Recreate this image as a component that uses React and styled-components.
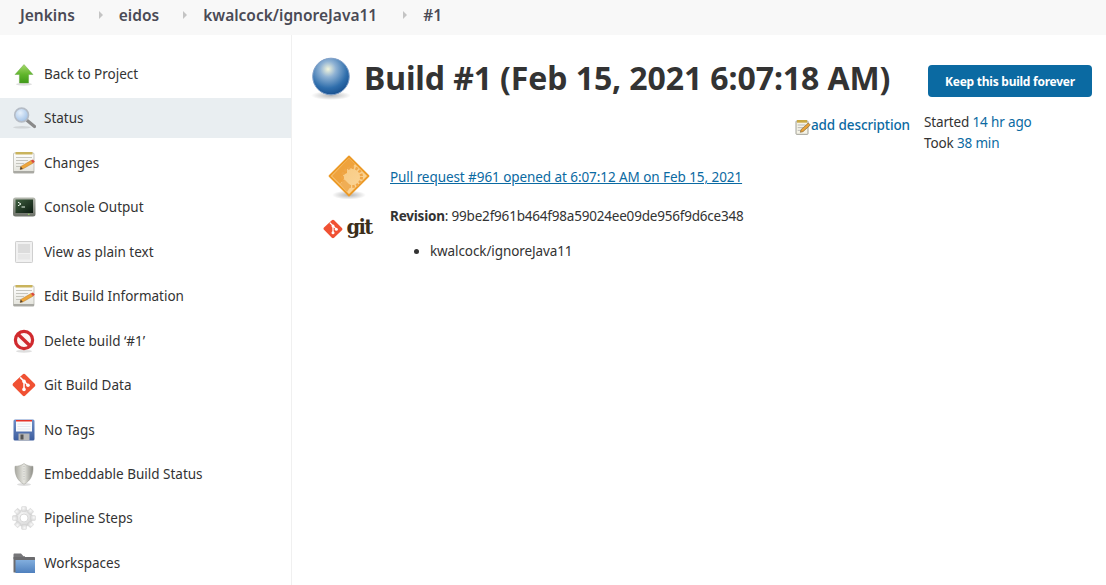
import React from "react";
import styled, { createGlobalStyle } from "styled-components";

const Global = createGlobalStyle`
  html, body { margin: 0; padding: 0; background: #fff; }
  body { font-family: "Noto Sans", "Open Sans", sans-serif; color: #333; font-size: 13.5px; height: 585px; overflow: hidden; }
`;

const Page = styled.div`display: flex; flex-direction: column; height: 585px; overflow: hidden;`;
const Crumbs = styled.nav`
  height: 35px; flex: none; background: #f8f8f8; display: flex; align-items: center;
  padding-left: 20px; padding-bottom: 5px; box-sizing: border-box; font-weight: 600; font-size: 15.5px; color: #4a4a55;
`;
const Crumb = styled.span`white-space: nowrap;`;
const Sep = styled.span`
  width: 0; height: 0; border-left: 4px solid #c4c4c4; border-top: 4px solid transparent; border-bottom: 4px solid transparent;
  margin: 0 ${p => p.$r}px 0 ${p => p.$l}px;
`;
const Body = styled.div`display: flex; flex: 1; min-height: 0;`;
const Side = styled.aside`
  width: 291px; flex: none; border-right: 1px solid #f0f0f0; padding-top: 19px; box-sizing: content-box;
`;
const Row = styled.div`
  height: 40px; margin-bottom: 4.45px; display: flex; align-items: center; padding-left: 12px; gap: 8px;
  background: ${p => (p.$active ? "#e9eef1" : "transparent")}; font-size: 13.5px; color: #333;
  white-space: nowrap;
`;
const IconBox = styled.span`display: block; width: 24px; height: 24px; flex: none;`;
const Main = styled.main`flex: 1; min-width: 0; padding: 0 14px 0 19px;`;
const TitleRow = styled.div`display: flex; align-items: flex-start; padding-top: 22px; height: 54px; box-sizing: content-box;`;
const Title = styled.h1`
  margin: 1px 0 0 13px; font-size: 32px; line-height: 40px; font-weight: 700; letter-spacing: -0.1px; color: #333; white-space: nowrap;
`;
const KeepButton = styled.button`
  margin: 8px 0 0 auto; width: 164px; height: 32px; border: 0; border-radius: 4px; background: #0b6aa2; color: #fff;
  font: 700 12px "Noto Sans", sans-serif; letter-spacing: -0.25px; padding: 0;
`;
const MetaRow = styled.div`display: flex; justify-content: flex-end; height: 30px;`;
const AddDesc = styled.a`
  display: flex; align-items: flex-start; font-size: 13.5px; font-weight: 500; color: #0b6aa2; line-height: 18px; margin-top: 5px; letter-spacing: -0.1px;
`;
const Times = styled.div`width: 168px; margin-left: 14px; font-size: 13.5px; letter-spacing: -0.15px; line-height: 21px; flex: none; margin-top: 1px;`;
const Blue = styled.span`color: #0b6aa2;`;
const Builds = styled.div`
  display: grid; grid-template-columns: 78px 1fr; margin-top: 14px;
`;
const LogoCell = styled.div`display: flex; justify-content: center; align-items: ${p => p.$a || "center"}; height: ${p => p.$h}px; padding-top: ${p => p.$t || 0}px;`;
const Cell = styled.div`padding-top: ${p => p.$t}px; margin-left: 1px; font-size: 13.5px; line-height: 18px;`;
const PRLink = styled.a`color: #0b6aa2; text-decoration: underline; letter-spacing: -0.07px;`;
const Rev = styled.div`letter-spacing: -0.2px;`;
const Bold = styled.b`font-weight: 700;`;
const List = styled.ul`margin: 17px 0 0; padding-left: 40px; letter-spacing: -0.1px;`;
const GitLogo = styled.span`display: flex; align-items: center; gap: 3px; margin-left: -5px;`;
const GitWord = styled.span`font: 700 19.5px/22px "DejaVu Serif", serif; color: #3c2e1a; letter-spacing: -1.6px; margin-top: -3px;`;

const Shadow = ({ y = 22.5, rx = 9 }) => <ellipse cx="12" cy={y} rx={rx} ry="1.4" fill="#000" opacity=".13" />;

const Arrow = () => (
  <svg width="24" height="24" viewBox="0 0 24 24">
    <defs><linearGradient id="ag" x1="0" y1="0" x2="0" y2="1"><stop offset="0" stopColor="#a5d86a" /><stop offset=".55" stopColor="#5fb52a" /><stop offset="1" stopColor="#3f9a18" /></linearGradient></defs>
    <Shadow y="22.3" rx="8" />
    <path d="M12 2.5 21 12.5H16.6V21H7.4V12.5H3Z" fill="url(#ag)" stroke="#5c9e3a" strokeWidth=".4" />
  </svg>
);
const Search = () => (
  <svg width="24" height="24" viewBox="0 0 24 24">
    <defs><radialGradient id="sg" cx=".4" cy=".35" r=".7"><stop offset="0" stopColor="#e8f1fb" /><stop offset="1" stopColor="#9dbfe6" /></radialGradient></defs>
    <ellipse cx="10" cy="21.3" rx="9" ry="1.3" fill="#000" opacity=".1" />
    <path d="M15.2 14.5 22.5 20.5" stroke="#8a8a8a" strokeWidth="3.2" strokeLinecap="round" />
    <circle cx="9.6" cy="9" r="6.9" fill="url(#sg)" stroke="#b5bcc6" strokeWidth="1.6" />
  </svg>
);
const Notepad = () => (
  <svg width="24" height="24" viewBox="0 0 24 24">
    <defs><linearGradient id="ng" x1="0" y1="0" x2="0" y2="1"><stop offset="0" stopColor="#fff" /><stop offset="1" stopColor="#e2e2da" /></linearGradient></defs>
    <rect x="1.5" y="2" width="20.5" height="20" rx="1" fill="url(#ng)" stroke="#b0b0a8" strokeWidth=".7" />
    <rect x="1.5" y="20" width="20.5" height="2.2" fill="#a9a9a3" />
    <rect x="3.5" y="1" width="17" height="2.5" fill="#c9b35c" />
    <path d="M4 6.5h16M4 9.5h12M4 12.5h8M4 15.5h5" stroke="#c0c0b8" strokeWidth=".9" />
    <path d="M8 18.5 8.8 15.4 18.8 9.6 21 12.2 10.8 18Z" fill="#eea63a" stroke="#a9722a" strokeWidth=".4" />
    <path d="M18.8 9.6 21 8.6 22.8 10.8 21 12.2Z" fill="#d94a3a" />
    <path d="M8 18.5 8.8 15.4 10.8 18Z" fill="#4d4030" />
  </svg>
);
const Term = () => (
  <svg width="24" height="24" viewBox="0 0 24 24">
    <defs><linearGradient id="tg" x1="0" y1="0" x2="0" y2="1"><stop offset="0" stopColor="#b4b8ae" /><stop offset="1" stopColor="#6c7168" /></linearGradient>
    <linearGradient id="ts" x1="0" y1="0" x2="1" y2="1"><stop offset="0" stopColor="#3f5f3f" /><stop offset="1" stopColor="#0b1a10" /></linearGradient></defs>
    <rect x="1" y="2.5" width="22.5" height="19" rx="2.5" fill="url(#tg)" />
    <rect x="3.5" y="4.5" width="17.5" height="13.5" fill="url(#ts)" />
    <path d="M6 7.2 9 9 6 10.8" stroke="#e8f4e8" strokeWidth="1" fill="none" />
    <path d="M9.5 12h3.5" stroke="#e8f4e8" strokeWidth="1" />
    <rect x="16" y="18.8" width="1.5" height="1" fill="#9be05a" />
  </svg>
);
const Doc = () => (
  <svg width="24" height="24" viewBox="0 0 24 24">
    <rect x="3.5" y="1.5" width="17" height="21" rx=".8" fill="#f1f1f1" stroke="#cfcfcf" />
    <rect x="6" y="4" width="12" height="9" fill="#dcdcdc" />
    <rect x="6" y="14" width="12" height="5.5" fill="#e7e7e7" />
  </svg>
);
const NoEntry = () => (
  <svg width="24" height="24" viewBox="0 0 24 24">
    <Shadow y="22.3" rx="8" />
    <circle cx="12" cy="11" r="8.6" fill="#fdf6f4" stroke="#d02a2e" strokeWidth="3.2" />
    <path d="M6 5.2 18 16.8" stroke="#d02a2e" strokeWidth="3.4" />
  </svg>
);
const GitMark = ({ size = 24, bg = "#f05133" }) => (
  <svg width={size} height={size} viewBox="0 0 24 24">
    <path d="M1.2 10.2 10.6 1.400c.8-.8 2-.8 2.800 0l9.300 9.400c.8.8.8 2 0 2.800l-9.400 9c-.8.7-1.900.7-2.700 0L1.200 13c-.8-.8-.8-2 0-2.800Z" fill={bg} />
    <path d="M8.2 4.400 16 12.200M12 8.400v8" stroke="#fff" strokeWidth="1.5" fill="none" />
    <circle cx="12" cy="8.4" r="1.8" fill="#fff" /><circle cx="12" cy="16.4" r="1.8" fill="#fff" /><circle cx="16" cy="12.2" r="1.8" fill="#fff" />
  </svg>
);
const Floppy = () => (
  <svg width="24" height="24" viewBox="0 0 24 24">
    <defs><linearGradient id="fg" x1="0" y1="0" x2="0" y2="1"><stop offset="0" stopColor="#6f8fc8" /><stop offset="1" stopColor="#3d5d9e" /></linearGradient></defs>
    <rect x="1.5" y="1.5" width="21" height="21" rx="1.5" fill="url(#fg)" />
    <rect x="4" y="2" width="16" height="11.5" fill="#fbfbfb" />
    <rect x="4" y="2" width="16" height="1.5" fill="#e33228" />
    <path d="M5.5 6h13M5.5 8.500h13M5.500 11h13" stroke="#dde3ee" strokeWidth=".8" />
    <rect x="6.5" y="15.5" width="11" height="7" fill="#b8b8b8" />
    <rect x="8.5" y="16.5" width="3" height="5" fill="#555" />
  </svg>
);
const Shield = () => (
  <svg width="24" height="24" viewBox="0 0 24 24">
    <defs><linearGradient id="shg" x1="0" y1="0" x2="1" y2="0"><stop offset="0" stopColor="#a8a8a0" /><stop offset=".5" stopColor="#e6e6e0" /><stop offset="1" stopColor="#8d8d86" /></linearGradient></defs>
    <Shadow y="22.5" rx="7" />
    <path d="M12 1.500c2.500 2 6 2.800 9 2.800 .5 8-2.200 14.500-9 18-6.800-3.500-9.500-10-9-18 3 0 6.500-.8 9-2.800Z" fill="url(#shg)" stroke="#9a9a92" strokeWidth=".5" />
    <path d="M12 4v15" stroke="#bbb" strokeDasharray="1 1.5" strokeWidth="1" />
  </svg>
);
const Gear = () => (
  <svg width="24" height="24" viewBox="0 0 24 24">
    <defs><radialGradient id="gg" cx=".4" cy=".35" r=".8"><stop offset="0" stopColor="#f8f8f8" /><stop offset="1" stopColor="#cfcfcf" /></radialGradient></defs>
    <g fill="url(#gg)" stroke="#d0d0d0" strokeWidth=".4">
      <circle cx="12" cy="12" r="8.5" />
      {[0, 45, 90, 135, 180, 225, 270, 315].map(a => <rect key={a} x="9.5" y="0.5" width="5" height="5" rx="1" transform={`rotate(${a} 12 12)`} />)}
    </g>
    <circle cx="12" cy="12" r="4" fill="#fff" stroke="#d8d8d8" />
  </svg>
);
const Folder = () => (
  <svg width="24" height="24" viewBox="0 0 24 24">
    <defs><linearGradient id="fog" x1="0" y1="0" x2="0" y2="1"><stop offset="0" stopColor="#82aede" /><stop offset="1" stopColor="#4f80bd" /></linearGradient></defs>
    <path d="M1.5 21.5V3.500c0-.5.400-1 1-1H9l2.500 2.800H13v3H1.500Z" fill="#77777a" />
    <rect x="1.5" y="6" width="21.5" height="15.5" fill="#6b6b6e" rx=".6" />
    <path d="M3.5 9H23V22H3.500Z" fill="url(#fog)" />
  </svg>
);
const Ball = () => (
  <svg width="40" height="44" viewBox="0 0 40 44">
    <defs>
      <radialGradient id="bg" cx=".42" cy=".3" r=".72"><stop offset="0" stopColor="#f4f6dc" /><stop offset=".3" stopColor="#8fb2d4" /><stop offset=".72" stopColor="#2f6eac" /><stop offset="1" stopColor="#184f8e" /></radialGradient>
      <radialGradient id="bs"><stop offset="0" stopColor="#000" stopOpacity=".28" /><stop offset="1" stopColor="#000" stopOpacity="0" /></radialGradient>
    </defs>
    <ellipse cx="20" cy="38.5" rx="20" ry="4.5" fill="url(#bs)" />
    <circle cx="20" cy="19.5" r="18.3" fill="url(#bg)" stroke="#7f9fc8" strokeWidth="1" />
  </svg>
);
const PullIcon = () => (
  <svg width="44" height="46" viewBox="0 0 44 46">
    <defs>
      <linearGradient id="pg" x1="0" y1="0" x2="1" y2="1"><stop offset="0" stopColor="#f7c67a" /><stop offset="1" stopColor="#fbd79b" /></linearGradient>
      <radialGradient id="ps"><stop offset="0" stopColor="#000" stopOpacity=".3" /><stop offset="1" stopColor="#000" stopOpacity="0" /></radialGradient>
    </defs>
    <ellipse cx="21" cy="40" rx="17" ry="4.5" fill="url(#ps)" />
    <path d="M21 1.500 40.500 21 21 40.500 1.500 21Z" fill="url(#pg)" stroke="#ec9a27" strokeWidth="1.8" strokeLinejoin="round" />
    <path d="M21 3 4 21 12 29 16 24 15 20 19 18 19 14 24 13 27 9Z" fill="#efa33d" />
    <circle cx="24" cy="22" r="9.5" fill="none" stroke="#efa647" strokeWidth="3" strokeDasharray="2.5 1.5" />
    <path d="M12 29 19 37 23 31 17 25Z" fill="#f0ae55" />
  </svg>
);
const EditMini = () => (
  <svg width="16" height="16" viewBox="0 0 24 24" style={{ marginTop: 3 }}>
    <rect x="1.5" y="3" width="18" height="20" rx="1" fill="#f5f3e6" stroke="#8a8a80" strokeWidth="1.2" />
    <rect x="3" y="1.5" width="15" height="4" fill="#c9a945" />
    <path d="M4 9h12M4 13h9M4 17h6" stroke="#aaa" strokeWidth="1.2" />
    <path d="M8 20 9 16 20 6 23 9 12 19Z" fill="#e8a33a" stroke="#6d5020" strokeWidth=".8" />
  </svg>
);

const rows = [
  ["Back to Project", Arrow], ["Status", Search, true], ["Changes", Notepad], ["Console Output", Term],
  ["View as plain text", Doc], ["Edit Build Information", Notepad], ["Delete build ‘#1’", NoEntry],
  ["Git Build Data", GitMark], ["No Tags", Floppy], ["Embeddable Build Status", Shield],
  ["Pipeline Steps", Gear], ["Workspaces", Folder],
];

export default function App() {
  return (
    <Page>
      <Global />
      <Crumbs>
        <Crumb>Jenkins</Crumb><Sep $l={24} $r={16} />
        <Crumb>eidos</Crumb><Sep $l={24} $r={16} />
        <Crumb>kwalcock/ignoreJava11</Crumb><Sep $l={26} $r={16} />
        <Crumb>#1</Crumb>
      </Crumbs>
      <Body>
        <Side>
          {rows.map(([label, Icon, active]) => (
            <Row key={label} $active={active}><IconBox><Icon /></IconBox>{label}</Row>
          ))}
        </Side>
        <Main>
          <TitleRow>
            <Ball />
            <Title>Build #1 (Feb 15, 2021 6:07:18 AM)</Title>
            <KeepButton>Keep this build forever</KeepButton>
          </TitleRow>
          <MetaRow>
            <AddDesc><EditMini />add description</AddDesc>
            <Times>
              <div>Started <Blue>14 hr ago</Blue></div>
              <div>Took <Blue>38 min</Blue></div>
            </Times>
          </MetaRow>
          <Builds>
            <LogoCell $h={46}><PullIcon /></LogoCell>
            <Cell $t={13}><PRLink>Pull request #961 opened at 6:07:12 AM on Feb 15, 2021</PRLink></Cell>
            <LogoCell $h={24} $t={16}><GitLogo><GitMark size={20} /><GitWord>git</GitWord></GitLogo></LogoCell>
            <Cell $t={6}>
              <Rev><Bold>Revision</Bold>: 99be2f961b464f98a59024ee09de956f9d6ce348</Rev>
              <List><li>kwalcock/ignoreJava11</li></List>
            </Cell>
          </Builds>
        </Main>
      </Body>
    </Page>
  );
}
